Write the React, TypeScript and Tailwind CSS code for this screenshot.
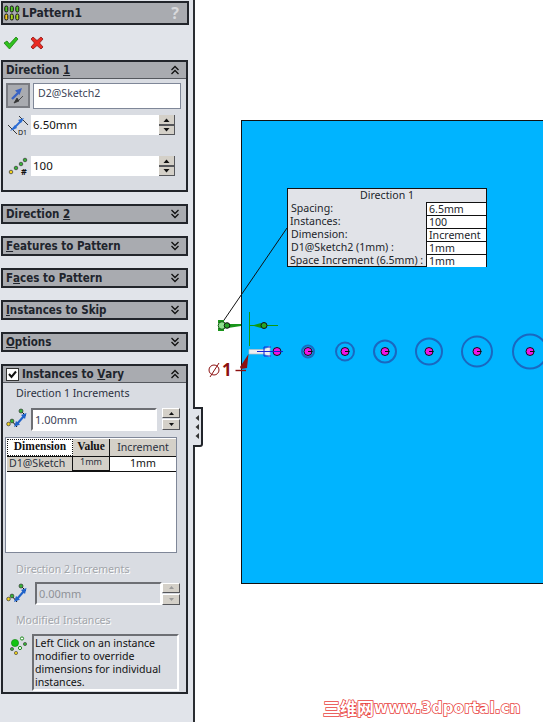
import type { ReactNode } from "react";

const Chevrons = ({ up }: { up?: boolean }) => (
  <svg width="10" height="10" viewBox="0 0 10 10" fill="none" stroke="#111" strokeWidth="1.3">
    {up ? (
      <>
        <path d="M1.5 5 L5 1.5 L8.5 5" />
        <path d="M1.5 9 L5 5.5 L8.5 9" />
      </>
    ) : (
      <>
        <path d="M1.5 1 L5 4.5 L8.5 1" />
        <path d="M1.5 5 L5 8.5 L8.5 5" />
      </>
    )}
  </svg>
);

const Header = ({ children, up }: { children: ReactNode; up?: boolean }) => (
  <div className="flex h-[16px] items-center justify-between bg-[#a9abb0] pl-[3px] pr-[6px] font-['DejaVu_Sans_Condensed','Liberation_Sans',sans-serif] text-[11.5px] leading-none font-bold text-[#20242c]">
    <div className="flex items-center pt-[1px] whitespace-nowrap">{children}</div>
    <Chevrons up={up} />
  </div>
);

const Collapsed = ({ children }: { children: ReactNode }) => (
  <div className="w-[187px] border-2 border-[#22252b]">
    <Header>{children}</Header>
  </div>
);

const Spin = () => (
  <div className="flex w-[16px] flex-col">
    <div className="flex h-[10px] items-center justify-center border-r border-b border-[#55565a] bg-[#d4d0c8]">
      <svg width="7" height="4" viewBox="0 0 7 4"><path d="M0.5 4 L3.5 0.5 L6.5 4Z" fill="#111" /></svg>
    </div>
    <div className="flex h-[10px] items-center justify-center border-t border-r border-b border-[#55565a] bg-[#d4d0c8]">
      <svg width="7" height="4" viewBox="0 0 7 4"><path d="M0.5 0 L3.5 3.5 L6.5 0Z" fill="#111" /></svg>
    </div>
  </div>
);

const StepSpin = ({ dim }: { dim?: boolean }) => {
  const color = dim ? "#9a9a9a" : "#111";
  return (
    <div className="flex w-[18px] flex-col gap-[1px]">
      <div className="flex h-[10px] items-center justify-center border border-[#fff] border-r-[#55565a] border-b-[#55565a] bg-[#d4d0c8]">
        <svg width="5" height="3" viewBox="0 0 5 3"><path d="M0 3 L2.5 0 L5 3Z" fill={color} /></svg>
      </div>
      <div className="flex h-[11px] items-center justify-center border border-[#fff] border-r-[#55565a] border-b-[#55565a] bg-[#d4d0c8]">
        <svg width="5" height="3" viewBox="0 0 5 3"><path d="M0 0 L2.5 3 L5 0Z" fill={color} /></svg>
      </div>
    </div>
  );
};

const StepIcon = () => (
  <svg width="22" height="22" viewBox="0 0 22 22">
    <path d="M6 13 L11 19 M15 3 L20 8" stroke="#111" strokeWidth="1" />
    <path d="M11 16 L18 8" stroke="#1f62c9" strokeWidth="2" />
    <path d="M8 19 L10 13 L14 16.5Z M20.5 5 L15 7 L19 11Z" fill="#1f62c9" />
    <circle cx="2.5" cy="16" r="1.8" fill="#f2d21c" stroke="#333" strokeWidth="0.7" />
    <circle cx="6" cy="13" r="1.9" fill="#36b336" stroke="#333" strokeWidth="0.7" />
    <circle cx="15" cy="3" r="2" fill="#36b336" stroke="#333" strokeWidth="0.7" />
  </svg>
);

const TitleIcon = () => (
  <svg width="16" height="16" viewBox="0 0 16 16">
    {[2, 7.5, 13].map((x) => (
      <g key={x}>
        <rect x={x - 1.2} y="1" width="3" height="6" rx="1.5" fill="#4ec81e" stroke="#111" strokeWidth="1" />
        <rect x={x - 1.2} y="9" width="3" height="6" rx="1.5" fill={x === 2 ? "#f4c81c" : "#a8d81c"} stroke="#111" strokeWidth="1" />
      </g>
    ))}
  </svg>
);

const Holes = () => {
  const holes = [
    { x: 308, r: 6 },
    { x: 345, r: 9 },
    { x: 385, r: 11 },
    { x: 429, r: 13 },
    { x: 477, r: 15 },
    { x: 530, r: 17 },
  ];
  return (
    <svg className="absolute top-0 left-0" width="543" height="722" viewBox="0 0 543 722" fill="none">
      {holes.map((h) => (
        <g key={h.x}>
          <circle cx={h.x} cy="351.5" r={h.r} stroke="#1a68c0" strokeWidth="2" />
          <circle cx={h.x} cy="351.5" r="4" fill="#f014e6" stroke="#111" strokeWidth="1" />
          <path d={`M${h.x} 351.5 h4.5`} stroke="#111" strokeWidth="1" />
        </g>
      ))}
      <circle cx="277" cy="351.5" r="4" fill="#f014e6" stroke="#111" strokeWidth="1" />
      <path d="M287 228 L222 323" stroke="#111" strokeWidth="1" />
      {/* origin markers */}
      <path d="M249.5 312 V346" stroke="#11980f" strokeWidth="1" />
      <path d="M250 325.5 H278" stroke="#11980f" strokeWidth="1" />
      <path d="M252 325.5 L261 323 V328Z" fill="#11980f" />
      <circle cx="264" cy="325.5" r="3" fill="#27a527" stroke="#111" strokeWidth="1" />
      <path d="M218 320 H224 V323 H218Z M218 328 H224 V331 H218Z" fill="#19951a" />
      <path d="M228 324 H241 V326 L228 328Z" fill="#19951a" />
      <circle cx="222" cy="325.5" r="3.8" fill="#8fe08f" stroke="#135c13" strokeWidth="1" />
      <circle cx="227" cy="325.5" r="2.8" fill="#27a527" stroke="#111" strokeWidth="1" />
      {/* hole wizard arrow */}
      <path d="M249 349.5 H264 L270 346 V357 L264 354 H249Z" fill="#eceef2" stroke="#b9bcc4" strokeWidth="0.7" />
      <path d="M257 351.5 H283 M264 347 V356" stroke="#1226d8" strokeWidth="1" />
      <path d="M264 347 H271 M264 356 H271" stroke="#1226d8" strokeWidth="1" />
      <path d="M248.5 354 L240 367 L241 369 L247 368Z" fill="#8c1010" />
      <path d="M235.5 370.5 H246" stroke="#8c1010" strokeWidth="1.4" />
      <circle cx="214" cy="370" r="5" stroke="#8c1010" strokeWidth="1" />
      <path d="M210 377 L219 363" stroke="#8c1010" strokeWidth="1" />
    </svg>
  );
};

const TipRow = ({ label, value, indent }: { label: string; value: string; indent?: string }) => (
  <div className="flex h-[13px] items-center">
    <div className={`flex-1 whitespace-nowrap ${indent ?? "pl-[3px]"}`}>{label}</div>
    <div className="h-[13px] w-[60px] border-t border-l border-[#111] bg-white pl-[2px] leading-[12px]">{value}</div>
  </div>
);

export default function App() {
  return (
    <div className="relative flex h-[722px] w-[543px] overflow-hidden bg-white font-['Noto_Sans',sans-serif] text-[10.6px] leading-none text-[#2b3040]">
      <div className="h-full w-[195px] shrink-0 border-r-2 border-[#2a2d32] bg-[#e1e4ea] pt-[1px] pl-[1px]">
        <div className="flex h-[24px] w-[188px] items-center justify-between border-2 border-[#22252b] bg-[#a9abb0] pr-[8px] pl-[1px]">
          <div className="flex items-center gap-[2px]">
            <TitleIcon />
            <span className="font-['DejaVu_Sans_Condensed','Liberation_Sans',sans-serif] text-[12px] font-bold text-[#20242c]">LPattern1</span>
          </div>
          <span className="text-[16px] font-bold text-[#d8d9dc]">?</span>
        </div>

        <div className="flex h-[35px] items-center gap-[11px] pl-[2px]">
          <svg width="16" height="14" viewBox="0 0 16 14">
            <path d="M1 7 L4 5 L6.5 8 L13 1 L15 3 L6.5 13Z" fill="#30c21e" stroke="#1d7d12" strokeWidth="0.8" />
          </svg>
          <svg width="14" height="14" viewBox="0 0 14 14">
            <path d="M1 3 L3 1 L7 4.5 L11 1 L13 3 L9.5 7 L13 11 L11 13 L7 9.5 L3 13 L1 11 L4.5 7Z" fill="#ea2a22" stroke="#8e1410" strokeWidth="0.8" />
          </svg>
        </div>

        <div className="flex flex-col gap-[12px]">
          <div className="h-[132px] w-[187px] border-2 border-[#22252b] bg-[#d9dce2]">
            <Header up>
              Direction&nbsp;<span className="underline">1</span>
            </Header>
            <div className="border-t border-[#55585e] pt-[4px] pl-[3px]">
              <div className="flex gap-[3px]">
                <div className="flex h-[25px] w-[24px] items-center justify-center border-2 border-[#7a7c82] bg-[#a9abb0]">
                  <svg width="18" height="18" viewBox="0 0 18 18">
                    <path d="M3 12 L9 6" stroke="#3a63c4" strokeWidth="2.4" />
                    <path d="M13 1 L6 3.5 L10.5 8Z" fill="#3a63c4" />
                    <path d="M14 9 L9 14 M5 16 L8 11 L10 14Z" stroke="#333" strokeWidth="0.8" fill="#333" />
                  </svg>
                </div>
                <div className="flex h-[26px] w-[148px] items-start border border-[#7f8798] bg-white pt-[4px] pl-[4px] text-[#3d4458]">
                  D2@Sketch2
                </div>
              </div>
              <div className="mt-[6px] flex h-[20px] items-center">
                <svg width="24" height="22" viewBox="0 0 24 22">
                  <path d="M2 11 L11 20 M13 2 L22 11" stroke="#222" strokeWidth="0.9" />
                  <path d="M7 15 L16 6" stroke="#2a6bd4" strokeWidth="1.8" />
                  <path d="M4 17 L9 11 L11 14Z M18 4 L12 6 L15 9Z" fill="#2a6bd4" />
                  <text x="12" y="21" fontSize="7" fill="#111">D1</text>
                </svg>
                <div className="ml-[1px] flex h-[20px] w-[128px] items-center bg-white pl-[2px] text-[11.5px] text-[#111]">6.50mm</div>
                <Spin />
              </div>
              <div className="mt-[21px] flex h-[20px] items-center">
                <svg width="24" height="22" viewBox="0 0 24 22">
                  <circle cx="5" cy="17" r="1.8" fill="#f2d21c" stroke="#333" strokeWidth="0.7" />
                  <circle cx="10" cy="13" r="1.8" fill="#36b336" stroke="#333" strokeWidth="0.7" />
                  <circle cx="15" cy="9" r="1.8" fill="#36b336" stroke="#333" strokeWidth="0.7" />
                  <circle cx="19" cy="5" r="1.8" fill="#36b336" stroke="#333" strokeWidth="0.7" />
                  <text x="15" y="20" fontSize="9" fontWeight="700" fill="#111">#</text>
                </svg>
                <div className="ml-[1px] flex h-[20px] w-[128px] items-center bg-white pl-[2px] text-[11.5px] text-[#111]">100</div>
                <Spin />
              </div>
            </div>
          </div>

          <Collapsed>
            Direction&nbsp;<span className="underline">2</span>
          </Collapsed>
          <Collapsed>
            <span className="underline">F</span>eatures to Pattern
          </Collapsed>
          <Collapsed>
            F<span className="underline">a</span>ces to Pattern
          </Collapsed>
          <Collapsed>
            <span className="underline">I</span>nstances to Skip
          </Collapsed>
          <Collapsed>
            <span className="underline">O</span>ptions
          </Collapsed>

          <div className="h-[330px] w-[187px] border-2 border-[#22252b] bg-[#d9dce2]">
            <Header up>
              <span className="mr-[3px] -mt-[1px] flex h-[13px] w-[13px] items-center justify-center border border-[#333] bg-white">
                <svg width="9" height="9" viewBox="0 0 9 9">
                  <path d="M1 4 L3.5 7 L8 1.5" stroke="#111" strokeWidth="2" fill="none" />
                </svg>
              </span>
              Instances to&nbsp;<span className="underline">V</span>ary
            </Header>
            <div className="border-t border-[#55585e] pl-[3px]">
              <div className="mt-[5px] pl-[10px]">Direction 1 Increments</div>
              <div className="mt-[9px] flex h-[23px] items-center">
                <StepIcon />
                <div className="ml-[3px] flex h-[23px] w-[126px] items-center border-2 border-[#6d6f74] border-r-white border-b-white bg-white pl-[2px] text-[11px] text-[#3d4458]">
                  1.00mm
                </div>
                <div className="ml-[5px]">
                  <StepSpin />
                </div>
              </div>

              <div className="mt-[6px] -ml-[1px] h-[116px] w-[172px] border border-[#7f8798] bg-white pt-[1px] pl-[1px]">
                <div className="flex h-[18px] border-b border-[#111]">
                  <div className="flex w-[66px] items-center justify-center border border-dotted border-[#111] font-['Liberation_Serif',serif] text-[11.5px] font-bold text-[#111]">
                    Dimension
                  </div>
                  <div className="flex w-[37px] items-center justify-center border-r border-[#111] bg-[#d4d0c8] font-['Liberation_Serif',serif] text-[11.5px] font-bold text-[#111]">
                    Value
                  </div>
                  <div className="flex w-[66px] items-center justify-center bg-[#d4d0c8]">Increment</div>
                </div>
                <div className="flex h-[15px] border-b border-[#111]">
                  <div className="flex w-[66px] items-center border-r border-[#111] bg-[#d4d0c8] pl-[2px]">D1@Sketch</div>
                  <div className="flex w-[37px] items-start justify-center border-r border-b border-[#111] bg-[#d4d0c8] text-[9px]">
                    1mm
                  </div>
                  <div className="flex w-[66px] items-center justify-center text-[#111]">1mm</div>
                </div>
              </div>

              <div className="mt-[11px] pl-[10px] text-[#a2a5aa] [text-shadow:1px_1px_0_#fff]">Direction 2 Increments</div>
              <div className="mt-[8px] flex h-[23px] items-center">
                <StepIcon />
                <div className="ml-[7px] flex h-[23px] w-[127px] items-center border-2 border-[#6d6f74] border-r-white border-b-white bg-[#d9dce2] pl-[2px] text-[11px] text-[#8f9298]">
                  0.00mm
                </div>
                <StepSpin dim />
              </div>
              <div className="mt-[10px] pl-[10px] text-[#a2a5aa] [text-shadow:1px_1px_0_#fff]">Modified Instances</div>
              <div className="mt-[8px] flex">
                <svg className="mt-[2px] ml-[3px]" width="19" height="20" viewBox="0 0 19 20">
                  <circle cx="6" cy="7" r="3.6" fill="#12c412" stroke="#0d7d0d" strokeWidth="0.6" />
                  <circle cx="13" cy="2.5" r="1.6" fill="#fff" stroke="#1d8a1d" strokeWidth="1" />
                  <circle cx="16" cy="8" r="1.6" fill="#36b336" stroke="#333" strokeWidth="0.6" />
                  <circle cx="11" cy="12" r="1.6" fill="#fff" stroke="#1d8a1d" strokeWidth="1" />
                  <circle cx="3" cy="13" r="1.6" fill="#36b336" stroke="#333" strokeWidth="0.6" />
                  <circle cx="7" cy="17" r="1.6" fill="#f2d21c" stroke="#333" strokeWidth="0.6" />
                </svg>
                <div className="ml-[4px] h-[57px] w-[147px] border-2 border-[#6d6f74] border-r-white border-b-white pt-[1px] pl-[1px] text-[10.6px] leading-[13px] text-[#111]">
                  Left Click on an instance modifier to override dimensions for individual instances.
                </div>
              </div>
            </div>
          </div>
        </div>
      </div>

      {/* collapse handle */}
      <div className="absolute top-[407px] left-[193px] flex h-[40px] w-[10px] flex-col items-center justify-center gap-[1px] rounded-br-[3px] border-2 border-l-0 border-[#22252b] bg-[#e1e4ea]">
        {[0, 1, 2].map((i) => (
          <svg key={i} width="4" height="8" viewBox="0 0 4 8">
            <path d="M4 1 L0.5 4 L4 7Z" fill="#333" />
          </svg>
        ))}
      </div>

      {/* graphics area */}
      <div className="absolute top-[120px] left-[241px] h-[464px] w-[302px] border-t border-l border-b border-[#111] bg-[#00b4ff]" />
      <Holes />

      <div className="absolute top-[188px] left-[287px] h-[79px] w-[200px] border border-[#111] bg-[#e1e3e8] text-[10.6px] text-[#22252b]">
        <div className="h-[13px] text-center leading-[13px]">Direction 1</div>
        <TipRow label="Spacing:" value="6.5mm" />
        <TipRow label="Instances:" value="100" indent="pl-[2px]" />
        <TipRow label="Dimension:" value="Increment" />
        <TipRow label="D1@Sketch2 (1mm) :" value="1mm" />
        <TipRow label="Space Increment (6.5mm) :" value="1mm" indent="pl-[2px]" />
      </div>

      <div className="absolute top-[361px] left-[222px] text-[17px] leading-[18px] font-bold text-[#8c1010]">1</div>

      <div className="absolute top-[699px] left-[323px] flex items-center font-semibold whitespace-nowrap text-white [-webkit-text-stroke:1.5px_#e8403c] [paint-order:stroke_fill]">
        <span className="font-['Noto_Sans_CJK_SC',sans-serif] text-[17px] leading-[18px]">三维网</span>
        <span className="font-['DejaVu_Sans',sans-serif] text-[15px] leading-[18px] tracking-[0.2px]">www.3dportal.cn</span>
      </div>
    </div>
  );
}
